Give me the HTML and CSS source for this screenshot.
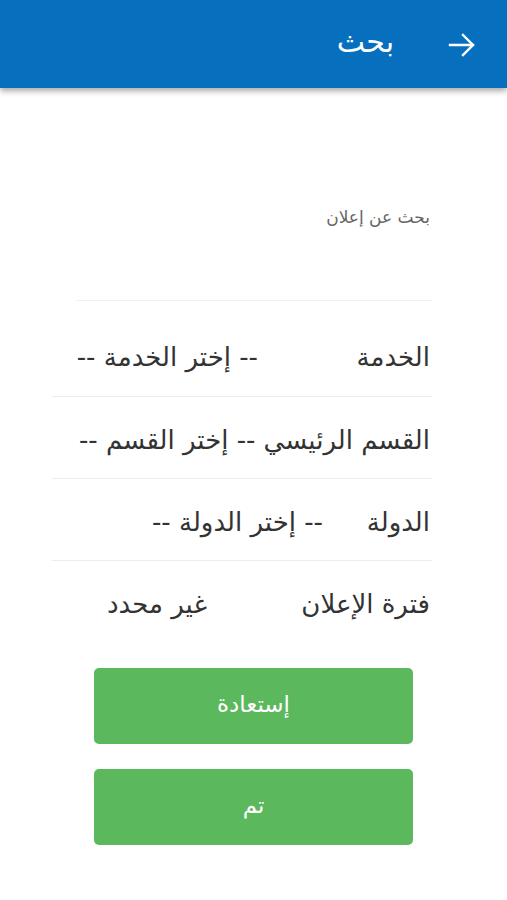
FILE: index.html
```html
<!DOCTYPE html>
<html lang="ar" dir="rtl">
<head>
<meta charset="utf-8">
<title>بحث</title>
<link rel="stylesheet" href="styles.css">
</head>
<body>
<header class="appbar">
  <svg class="back" width="28" height="28" viewBox="0 0 28 28" aria-hidden="true">
    <path d="M2 14 H25 M15 4 L25 14 L15 24" fill="none" stroke="#fff" stroke-width="2.4" stroke-linecap="square" stroke-linejoin="miter"/>
  </svg>
  <h1 class="title">بحث</h1>
</header>
<main class="content">
  <p class="search-label">بحث عن إعلان</p>
  <div class="divider"></div>
  <div class="rows">
    <div class="row row-first">
      <span class="label w-service">الخدمة</span>
      <span class="value">-- إختر الخدمة --</span>
    </div>
    <div class="row">
      <span class="label">القسم الرئيسي</span>
      <span class="value gap-s">-- إختر القسم --</span>
    </div>
    <div class="row">
      <span class="label w-country">الدولة</span>
      <span class="value">-- إختر الدولة --</span>
    </div>
    <div class="row row-last">
      <span class="label w-period">فترة الإعلان</span>
      <span class="value">غير محدد</span>
    </div>
  </div>
  <div class="actions">
    <button class="btn">إستعادة</button>
    <button class="btn">تم</button>
  </div>
</main>
</body>
</html>
```
FILE: styles.css
```css
* { box-sizing: border-box; }
html, body { margin: 0; padding: 0; background: #fff; }
body {
  font-family: "DejaVu Sans", "Noto Sans", sans-serif;
  color: #333;
  width: 507px;
}
.appbar {
  height: 88px;
  background: #0670bf;
  display: flex;
  align-items: center;
  padding-right: 31px;
  box-shadow: 0 3px 6px rgba(0,0,0,0.35);
  position: relative;
}
.back { display: block; margin-top: 2px; }
.title {
  margin: 0 54px 0 0;
  font-size: 30px;
  font-weight: normal;
  color: #fff;
  line-height: 34px;
  padding-bottom: 4px;
}
.content { padding-top: 117px; }
.search-label {
  margin: 0 77px 0 0;
  font-size: 17px;
  line-height: 24px;
  color: #666;
}
.divider {
  margin: 71px 75px 0 77px;
  height: 1px;
  background: #f0f0f0;
}
.rows { margin: 0 75px 0 52px; }
.row {
  display: flex;
  align-items: center;
  padding: 28px 2px 23px 0;
  border-bottom: 1px solid #ececec;
  font-size: 26px;
  line-height: 30px;
  white-space: nowrap;
}
.row-first { padding-top: 41px; padding-bottom: 24px; }
.row-last { border-bottom: none; }
.label { display: inline-block; }
.w-service { min-width: 172px; }
.w-country { min-width: 107px; }
.w-period { min-width: 223px; }
.gap-s { margin-right: 8px; }
.actions {
  margin-top: 26px;
  display: flex;
  flex-direction: column;
  align-items: center;
  gap: 25px;
}
.btn {
  width: 319px;
  height: 76px;
  border: none;
  border-radius: 5px;
  background: #5cb85c;
  color: #fff;
  font-family: "DejaVu Sans", "Noto Sans", sans-serif;
  font-size: 23px;
  padding: 0 0 4px;
}
```
